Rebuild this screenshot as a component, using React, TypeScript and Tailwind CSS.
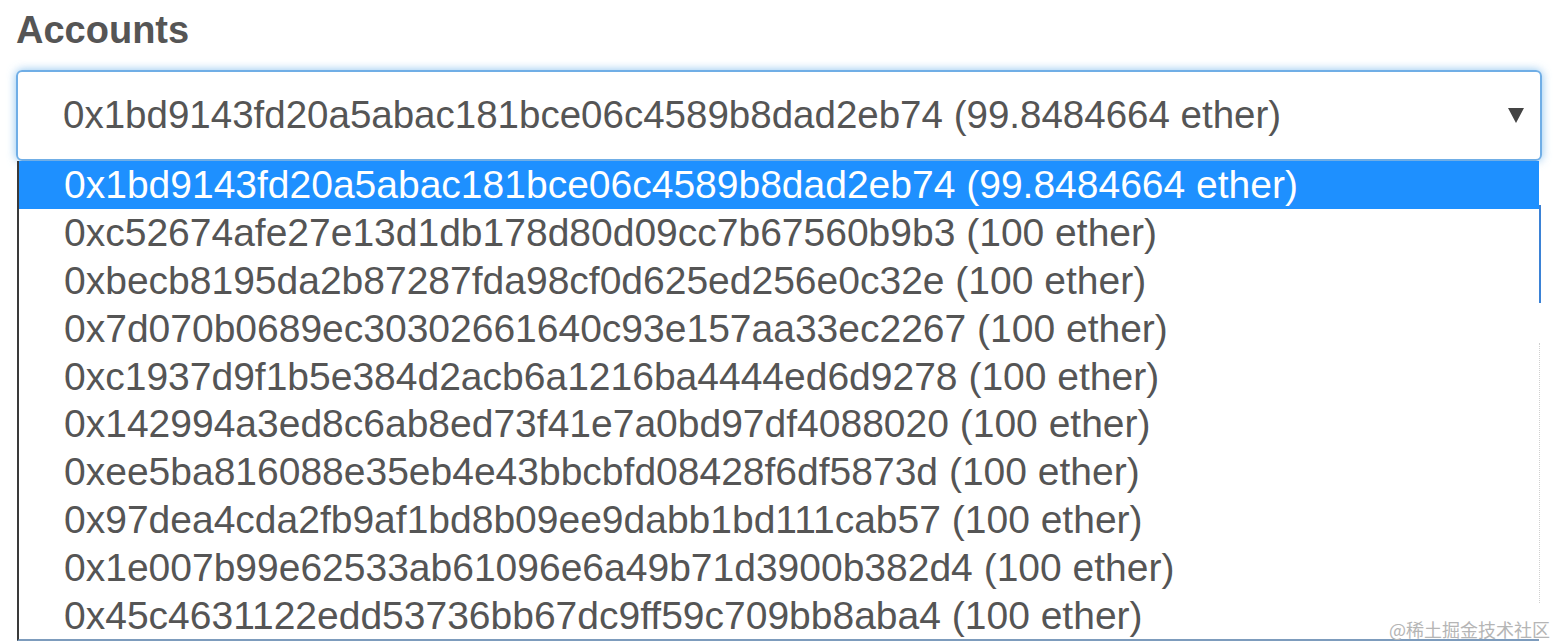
const accounts = [
  { addr: "0x1bd9143fd20a5abac181bce06c4589b8dad2eb74", bal: "99.8484664" },
  { addr: "0xc52674afe27e13d1db178d80d09cc7b67560b9b3", bal: "100" },
  { addr: "0xbecb8195da2b87287fda98cf0d625ed256e0c32e", bal: "100" },
  { addr: "0x7d070b0689ec30302661640c93e157aa33ec2267", bal: "100" },
  { addr: "0xc1937d9f1b5e384d2acb6a1216ba4444ed6d9278", bal: "100" },
  { addr: "0x142994a3ed8c6ab8ed73f41e7a0bd97df4088020", bal: "100" },
  { addr: "0xee5ba816088e35eb4e43bbcbfd08428f6df5873d", bal: "100" },
  { addr: "0x97dea4cda2fb9af1bd8b09ee9dabb1bd111cab57", bal: "100" },
  { addr: "0x1e007b99e62533ab61096e6a49b71d3900b382d4", bal: "100" },
  { addr: "0x45c4631122edd53736bb67dc9ff59c709bb8aba4", bal: "100" },
];

export default function App() {
  const selected = 0;

  return (
    <div className="relative h-[642px] w-[1556px] overflow-hidden bg-white pl-4 pt-2 font-['Liberation_Sans',Arial,sans-serif] text-[#555]">
      <h1 className="text-[38px] font-bold leading-[44px] text-[#555]">Accounts</h1>

      {/* select (focused) */}
      <div className="mt-[18px] flex h-[91px] w-[1526px] items-center rounded-md border-2 border-[#70aee6] pl-[45px] pr-4 shadow-[0_0_10px_rgba(102,175,233,0.75)]">
        <span className="flex-1 whitespace-nowrap text-[38.5px] leading-none">
          {accounts[selected].addr} ({accounts[selected].bal} ether)
        </span>
        <svg width="16" height="15" viewBox="0 0 16 15">
          <path d="M0 0 H16 L8 15 Z" fill="#444" />
        </svg>
      </div>

      {/* open option list */}
      <div className="ml-px flex">
        <ul className="w-[1522px] border-b-2 border-l-2 border-b-[#7d9cbd] border-l-[#3a3a3a]">
          {accounts.map((a, i) => (
            <li
              key={a.addr}
              className={
                "flex h-[47.8px] items-center whitespace-nowrap pl-[45px] text-[39px] leading-none " +
                (i === selected ? "bg-[#1e90ff] text-white" : "text-[#555]")
              }
            >
              {a.addr} ({a.bal} ether)
            </li>
          ))}
        </ul>
        <div className="flex flex-col">
          <div className="mt-[44px] h-[98px] w-0.5 bg-[#3b82d6]"></div>
          <div className="mt-[40px] h-[260px] w-0.5 border-l border-dotted border-[#d0d0d0]"></div>
        </div>
      </div>

      <div className="absolute bottom-[4px] right-[6px] font-['Noto_Sans_CJK_SC',sans-serif] text-[18px] leading-none text-[#b5b5b5]">
        @稀土掘金技术社区
      </div>
    </div>
  );
}
